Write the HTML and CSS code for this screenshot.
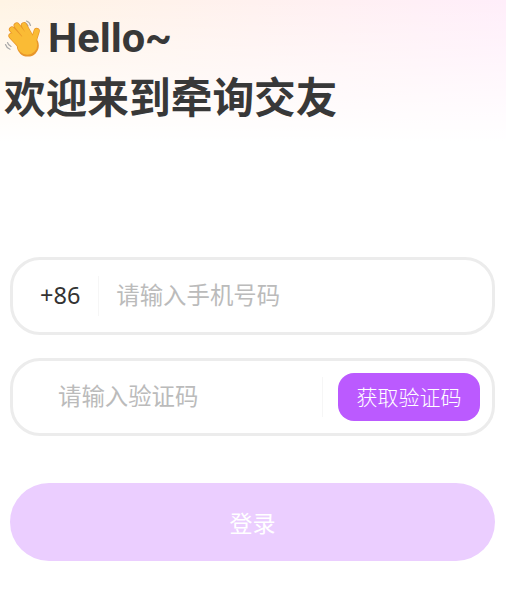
FILE: index.html
```html
<!DOCTYPE html>
<html lang="zh-CN">
<head>
<meta charset="UTF-8">
<meta name="viewport" content="width=device-width, initial-scale=1.0">
<title>登录</title>
<link rel="stylesheet" href="styles.css">
</head>
<body>
<div class="page">
  <div class="header">
    <div class="hello">
      <svg class="wave" viewBox="0 0 38 38" width="38" height="38">
        <g fill="none" stroke="#a8a8a8" stroke-width="1.2" stroke-linecap="round">
          <path d="M20.500 2.500c1.800.5 3 1.800 3.500 3.500"/>
          <path d="M22.500 1c2 .7 3.400 2.200 4 4.500"/>
          <path d="M3.500 22.500c.5 1.800 1.800 3.300 3.500 4"/>
          <path d="M1.500 24.500c.7 2.200 2.300 4 4.500 4.800"/>
        </g>
        <g fill="none" stroke="#e8962a" stroke-linecap="round">
          <path stroke-width="6.200" d="M20 5.200 27.700 19M12.700 5.500 24.300 20M8 9.500 21 23.700M7.500 15.800 17.700 27M32.700 11 29.300 22"/>
        </g>
        <circle cx="23.800" cy="25.600" r="11" fill="#e8962a"/>
        <g fill="none" stroke="#fabb35" stroke-linecap="round">
          <path stroke-width="4.800" d="M20 5.200 27.700 19M12.700 5.500 24.300 20M8 9.500 21 23.700M7.500 15.800 17.700 27M32.700 11 29.300 22"/>
        </g>
        <circle cx="23.300" cy="24.800" r="10" fill="#fabb35"/>
      </svg>
      <span>Hello~</span>
    </div>
    <h1 class="welcome">欢迎来到牵询交友</h1>
  </div>
  <div class="form">
    <div class="field">
      <span class="code">+86</span>
      <span class="divider"></span>
      <span class="holder phone">请输入手机号码</span>
    </div>
    <div class="field field-sms">
      <span class="holder sms">请输入验证码</span>
      <span class="divider"></span>
      <button class="get-code">获取验证码</button>
    </div>
    <button class="login">登录</button>
  </div>
</div>
</body>
</html>
```

FILE: styles.css
```css
body {
margin: 0;
background-color: #fff;
font-family: "Noto Sans", "Noto Sans CJK SC", sans-serif;
}
.page {
height: 597px;
overflow: hidden;
}
.header {
height: 257px;
padding-top: 15px;
box-sizing: border-box;
background:
linear-gradient(to bottom, rgba(255,255,255,0) 0, #fff 142px),
linear-gradient(to right, #fff4e4, #ffeefa);
}
.hello {
display: flex;
align-items: center;
height: 48px;
padding-left: 4px;
font-size: 41.5px;
font-weight: 700;
color: #383838;
}
.wave {
margin-right: 6px;
}
.hello span {
padding-bottom: 3px;
font-family: Roboto, "Noto Sans", sans-serif;
}
.welcome {
margin: 7px 0 0 4px;
font-size: 41.7px;
line-height: 50px;
font-weight: 700;
color: #383838;
font-family: "Noto Sans CJK SC", sans-serif;
}
.form {
padding: 0 11px 0 10px;
}
.field {
display: flex;
align-items: center;
height: 78px;
box-sizing: border-box;
border: 3px solid #ececec;
border-radius: 30px;
margin-bottom: 23px;
background: #fff;
}
.code {
margin-left: 27px;
padding-bottom: 2px;
font-size: 23.5px;
color: #333;
font-family: "Noto Sans", sans-serif;
}
.divider {
width: 1px;
height: 40px;
background: #f6f6f6;
}
.code + .divider {
margin: 0 17px 0 18px;
}
.holder {
padding-bottom: 4px;
font-size: 23.4px;
color: #bbb;
font-family: "Noto Sans CJK SC", sans-serif;
}
.sms {
margin-left: 45px;
flex: 1;
}
.get-code {
width: 142px;
height: 48px;
margin: 0 12px 0 15px;
padding: 0 0 3px;
border: none;
border-radius: 16px;
background-color: #bb5aff;
color: #fff;
font-size: 21px;
font-weight: 300;
font-family: "Noto Sans CJK SC", sans-serif;
}
.login {
display: block;
width: 100%;
height: 78px;
margin-top: 47px;
padding: 0 0 1px;
border: none;
border-radius: 39px;
background-color: #ebceff;
color: #fff;
font-size: 23px;
font-weight: 400;
font-family: "Noto Sans CJK SC", sans-serif;
}
```
